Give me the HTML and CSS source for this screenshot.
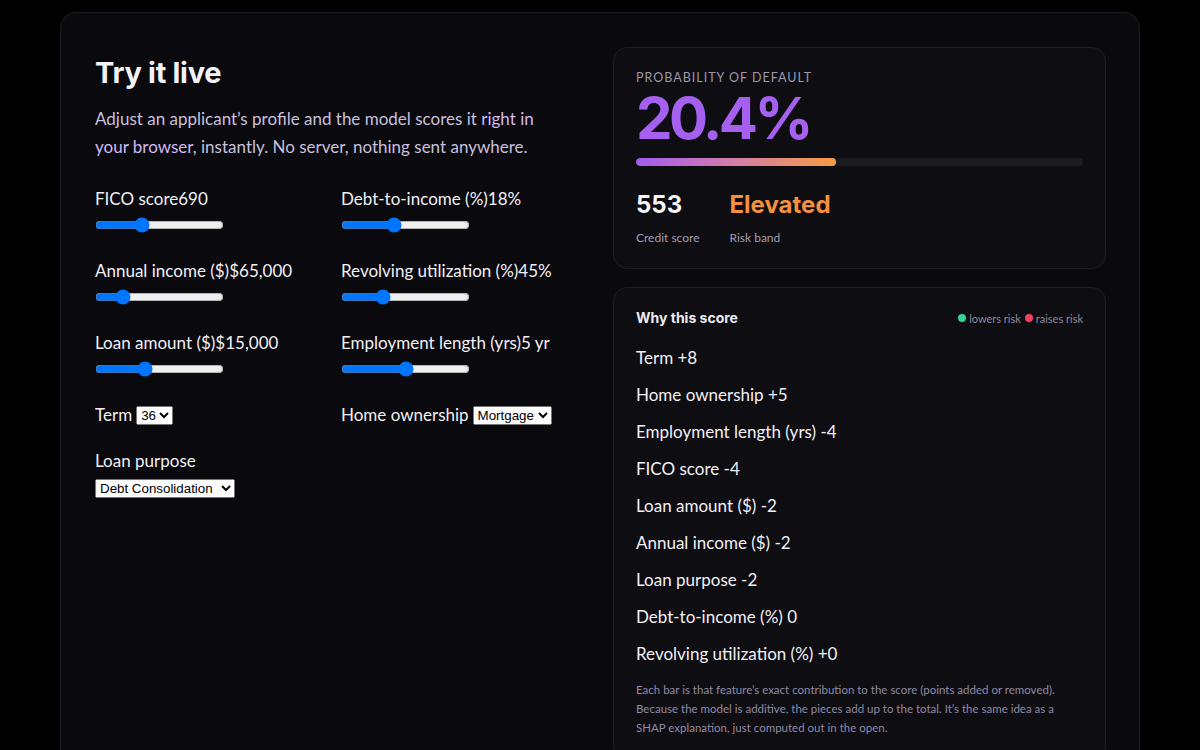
FILE: index.html
```html
<!DOCTYPE html>
<html lang="en">
<head>
  <meta charset="UTF-8">
  <meta name="viewport" content="width=device-width, initial-scale=1.0">
  <title>Try it live</title>
  <link rel="stylesheet" href="styles.css">
</head>
<body>
  <section class="demo">
    <div class="demo-left">
      <h2 class="demo-title">Try it live</h2>
      <p class="demo-intro">Adjust an applicant’s profile and the model scores it <span class="hl">right in your browser</span>, instantly. No server, nothing sent anywhere.</p>

      <div class="controls">
        <div class="control">
          <label for="fico">FICO score<span>690</span></label>
          <input type="range" id="fico" min="300" max="850" value="490">
        </div>
        <div class="control">
          <label for="dti">Debt-to-income (%)<span>18%</span></label>
          <input type="range" id="dti" min="0" max="45" value="18">
        </div>
        <div class="control">
          <label for="income">Annual income ($)<span>$65,000</span></label>
          <input type="range" id="income" min="0" max="100" value="18">
        </div>
        <div class="control">
          <label for="revol">Revolving utilization (%)<span>45%</span></label>
          <input type="range" id="revol" min="0" max="150" value="45">
        </div>
        <div class="control">
          <label for="loan">Loan amount ($)<span>$15,000</span></label>
          <input type="range" id="loan" min="0" max="40000" value="15000">
        </div>
        <div class="control">
          <label for="emp">Employment length (yrs)<span>5 yr</span></label>
          <input type="range" id="emp" min="0" max="10" value="5">
        </div>
        <div class="control inline">
          <label for="term">Term</label>
          <select id="term">
            <option>36</option>
            <option>60</option>
          </select>
        </div>
        <div class="control inline">
          <label for="home">Home ownership</label>
          <select id="home">
            <option>Mortgage</option>
            <option>Rent</option>
            <option>Own</option>
          </select>
        </div>
        <div class="control">
          <label for="purpose">Loan purpose</label>
          <select id="purpose" class="purpose">
            <option>Debt Consolidation</option>
            <option>Credit Card</option>
            <option>Home Improvement</option>
          </select>
        </div>
      </div>
    </div>

    <div class="demo-right">
      <div class="panel result">
        <div class="eyebrow">PROBABILITY OF DEFAULT</div>
        <div class="pd">20.4%</div>
        <div class="meter"><div class="meter-fill" style="width: 44.8%"></div></div>
        <div class="stats">
          <div class="stat">
            <div class="stat-value">553</div>
            <div class="stat-label">Credit score</div>
          </div>
          <div class="stat">
            <div class="stat-value band">Elevated</div>
            <div class="stat-label">Risk band</div>
          </div>
        </div>
      </div>

      <div class="panel why">
        <div class="why-head">
          <h3>Why this score</h3>
          <div class="legend">
            <span class="dot green"></span>lowers risk
            <span class="dot red"></span>raises risk
          </div>
        </div>
        <ul class="factors">
          <li>Term +8</li>
          <li>Home ownership +5</li>
          <li>Employment length (yrs) -4</li>
          <li>FICO score -4</li>
          <li>Loan amount ($) -2</li>
          <li>Annual income ($) -2</li>
          <li>Loan purpose -2</li>
          <li>Debt-to-income (%) 0</li>
          <li>Revolving utilization (%) +0</li>
        </ul>
        <p class="note">Each bar is that feature’s exact contribution to the score (points added or removed). Because the model is additive, the pieces add up to the total. It’s the same idea as a SHAP explanation, just computed out in the open.</p>
      </div>
    </div>
  </section>
</body>
</html>
```

FILE: styles.css
```css
body {
  margin: 0;
  padding-top: 12px;
  background: #000;
  color: #f0eef5;
  font-family: Lato, "Open Sans", sans-serif;
}
.demo {
  width: 1080px;
  min-height: 800px;
  margin: 0 auto;
  box-sizing: border-box;
  padding: 34px 35px 35px 34px;
  background: #0a090d;
  border: 1px solid #1d1c23;
  border-radius: 16px;
  display: grid;
  grid-template-columns: 1fr 493px;
  column-gap: 52px;
  align-items: start;
}
.demo-title {
  margin: 8px 0 0;
  font-family: Inter, sans-serif;
  font-size: 29px;
  line-height: 36px;
  font-weight: 700;
  letter-spacing: -0.3px;
  color: #f4f2f8;
}
.demo-intro {
  max-width: 445px;
  margin: 14px 0 0;
  font-size: 17px;
  line-height: 28px;
  color: #c8c0dd;
}
.demo-intro .hl {
  color: #d2b9f5;
}
.controls {
  margin-top: 28px;
  display: grid;
  grid-template-columns: 220px 220px;
  column-gap: 26px;
  row-gap: 26px;
}
.control {
  display: flex;
  flex-direction: column;
  align-items: flex-start;
  gap: 6px;
}
.control label {
  font-size: 17px;
  line-height: 20px;
  color: #f2f0f6;
  white-space: nowrap;
}
.control input[type=range] {
  margin: 2px 0;
}
.control.inline {
  flex-direction: row;
  align-items: center;
  gap: 4px;
}
.control .purpose {
  margin-top: 2px;
}
.panel {
  background: #0e0d12;
  border: 1px solid #1f1e26;
  border-radius: 14px;
  padding: 22px 22px;
}
.eyebrow {
  font-size: 12.5px;
  line-height: 16px;
  letter-spacing: 1px;
  color: #9c97ab;
}
.pd {
  margin-top: 2px;
  font-family: Inter, sans-serif;
  font-size: 58px;
  line-height: 60px;
  font-weight: 700;
  letter-spacing: -3.5px;
  color: #a660f0;
}
.meter {
  margin-top: 10px;
  height: 8px;
  border-radius: 4px;
  background: #1b1a20;
  overflow: hidden;
}
.meter-fill {
  height: 100%;
  border-radius: 4px;
  background: linear-gradient(90deg, #a35cf0, #d37fa8 50%, #f79a44);
}
.stats {
  margin-top: 24px;
  display: flex;
  gap: 30px;
}
.stat-value {
  font-family: Inter, sans-serif;
  font-size: 24px;
  line-height: 30px;
  font-weight: 700;
  color: #f6f5fa;
}
.stat-value.band {
  color: #f5913e;
}
.stat-label {
  margin-top: 10px;
  font-size: 12px;
  line-height: 16px;
  color: #a29db1;
}
.why {
  margin-top: 18px;
}
.why-head {
  display: flex;
  justify-content: space-between;
  align-items: center;
}
.why-head h3 {
  margin: 0;
  font-family: Inter, sans-serif;
  font-size: 14px;
  line-height: 16px;
  font-weight: 700;
  color: #ecebf2;
}
.legend {
  font-size: 11px;
  color: #8d889c;
  display: flex;
  align-items: center;
}
.dot {
  width: 8px;
  height: 8px;
  border-radius: 50%;
  margin: 0 3px 0 4px;
}
.dot.green {
  background: #34d399;
}
.dot.red {
  background: #f43f5e;
}
.factors {
  list-style: none;
  margin: 21px 0 0;
  padding: 0;
}
.factors li {
  font-size: 17px;
  line-height: 22px;
  margin-bottom: 15px;
  color: #f2f0f6;
}
.note {
  max-width: 430px;
  margin: 2px 0 0;
  font-size: 11.5px;
  line-height: 19px;
  color: #8f8aa4;
}
```
